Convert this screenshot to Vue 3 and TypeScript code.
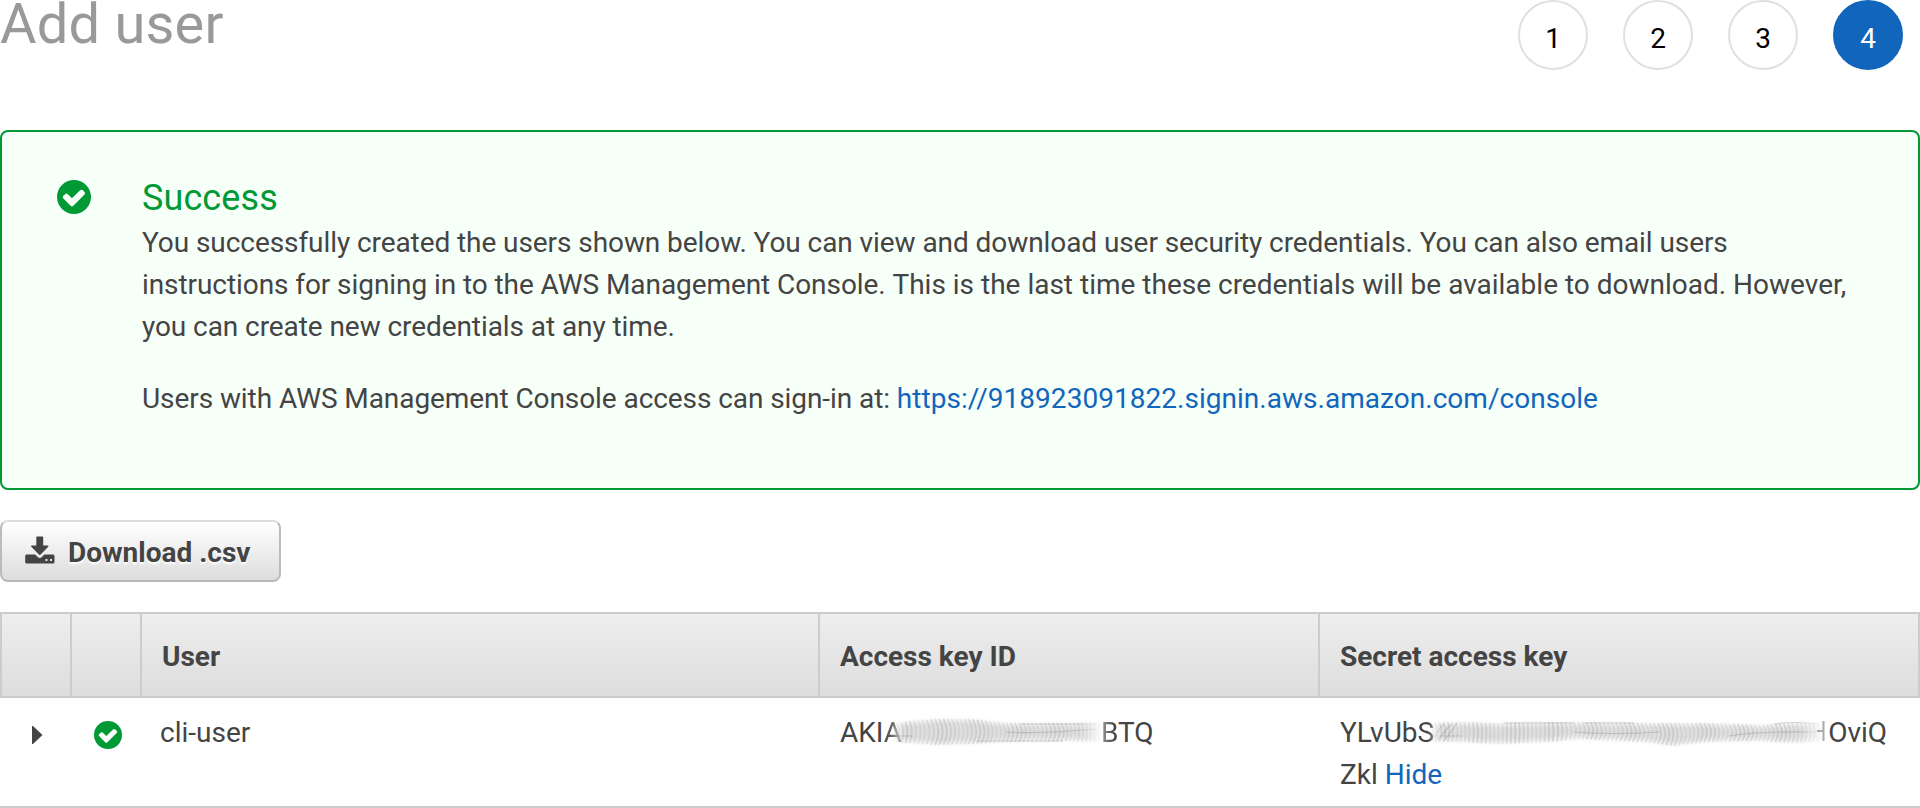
<script setup lang="ts">
interface EdgePoint {
  x: number
  top: number
  bottom: number
  bend: number
}

interface Smear {
  id: string
  width: number
  fill: string
  ridges: { d: string; opacity: number }[]
  streaks: string[]
}

const steps = [1, 2, 3, 4]
const currentStep = 4

const checkPath =
  'M50 0A50 50 0 1 1 50 100A50 50 0 1 1 50 0ZM18 54L40 76Q44 80 48 76L81 43Q85 39 81 35L76 30Q72 27 68 30L44 54L32 42Q28 38 24 42L18 47Q15 50 18 54Z'

function sample(points: EdgePoint[], x: number): EdgePoint {
  const i = Math.max(1, points.findIndex((p) => p.x >= x))
  const a = points[i - 1]
  const b = points[i]
  const t = (x - a.x) / (b.x - a.x)
  const mix = (m: number, n: number) => m + (n - m) * t
  return { x, top: mix(a.top, b.top), bottom: mix(a.bottom, b.bottom), bend: mix(a.bend, b.bend) }
}

function buildSmear(id: string, points: EdgePoint[], streaks: string[]): Smear {
  const first = points[0].x
  const last = points[points.length - 1].x
  const upper = points.map((p) => `${p.x} ${p.top + 2}`)
  const lower = points.map((p) => `${p.x} ${p.bottom - 2}`).reverse()
  const ridges: Smear['ridges'] = []
  for (let x = first + 2, n = 0; x < last; x += 4.2, n++) {
    const p = sample(points, x)
    const middle = (p.top + p.bottom) / 2
    ridges.push({
      d: `M${x} ${p.top}Q${x + p.bend} ${middle} ${x} ${p.bottom}`,
      opacity: 0.3 + 0.1 * Math.sin(n * 0.7),
    })
  }
  return { id, width: last, fill: `M${[...upper, ...lower].join('L')}Z`, ridges, streaks }
}

const keySmear = buildSmear(
  'key',
  [
    { x: 0, top: 19, bottom: 37, bend: 3 },
    { x: 20, top: 16, bottom: 38, bend: 4 },
    { x: 45, top: 14, bottom: 40, bend: 7 },
    { x: 80, top: 14, bottom: 39, bend: 7 },
    { x: 115, top: 18, bottom: 37, bend: 6 },
    { x: 170, top: 18, bottom: 36, bend: 6 },
    { x: 213, top: 17, bottom: 37, bend: -2 },
  ],
  ['M4 31H22', 'M86 36H172', 'M115 27Q150 29 205 24', 'M130 19H205'],
)

const secretSmear = buildSmear(
  'secret',
  [
    { x: 0, top: 18, bottom: 37, bend: 5 },
    { x: 30, top: 17, bottom: 37, bend: 2 },
    { x: 70, top: 18, bottom: 39, bend: 1 },
    { x: 120, top: 17, bottom: 37, bend: 1 },
    { x: 150, top: 17, bottom: 34, bend: 5 },
    { x: 215, top: 18, bottom: 37, bend: 7 },
    { x: 245, top: 18, bottom: 41, bend: 6 },
    { x: 275, top: 18, bottom: 37, bend: 6 },
    { x: 330, top: 20, bottom: 36, bend: 6 },
    { x: 365, top: 18, bottom: 38, bend: 4 },
    { x: 396, top: 17, bottom: 36, bend: 3 },
  ],
  ['M0 31H33', 'M3 35L14 19', 'M9 35L22 19', 'M16 35L28 18', 'M75 18H145', 'M145 27Q185 30 230 27', 'M155 18H205', 'M345 19Q365 16 388 19', 'M300 31Q330 26 388 27'],
)
</script>

<template>
  <main class="page">
    <header class="top">
      <h1 class="title">Add user</h1>
      <ol class="steps">
        <li v-for="step in steps" :key="step" class="step" :class="{ current: step === currentStep }">{{ step }}</li>
      </ol>
    </header>

    <section class="alert">
      <svg class="alert-icon" viewBox="0 0 100 100"><path :d="checkPath" fill="#093" fill-rule="evenodd" /></svg>
      <div class="alert-body">
        <h2>Success</h2>
        <p class="tight">
          You successfully created the users shown below. You can view and download user security credentials. You can
          also email users instructions for signing in to the AWS Management Console.
          <span class="normal"
            >This is the last time these credentials will be available to download. However,</span
          >
          you can create new credentials at any time.
        </p>
        <p class="tight">
          Users with AWS Management Console access can sign-in at:
          <a class="link url">https://918923091822.signin.aws.amazon.com/console</a>
        </p>
      </div>
    </section>

    <button class="download" type="button">
      <svg class="download-icon" viewBox="0 0 30 28">
        <path
          fill="#444"
          fill-rule="evenodd"
          d="M12 .5H17.500Q18.200 .5 18.200 1.200V9.500H22.500Q24.300 9.500 23.200 10.800L15.700 18.600Q14.800 19.500 13.900 18.600L6.300 10.800Q5.200 9.500 7 9.500H11.300V1.200Q11.300 .5 12 .5ZM1.500 18.500H10.200L12.700 21Q14.800 23 16.900 21L19.300 18.500H28Q29.500 18.500 29.500 20V26Q29.500 27.500 28 27.500H1.500Q.2 27.500 .2 26V20Q.2 18.500 1.500 18.500ZM20.500 23V25H22.500V23ZM25 23V25H27V23Z"
        />
      </svg>
      <span class="download-label">Download .csv</span>
    </button>

    <table class="users">
      <colgroup>
        <col class="col-icon" />
        <col class="col-icon" />
        <col class="col-user" />
        <col class="col-key" />
        <col />
      </colgroup>
      <thead>
        <tr>
          <th></th>
          <th></th>
          <th>User</th>
          <th>Access key ID</th>
          <th>Secret access key</th>
        </tr>
      </thead>
      <tbody>
        <tr>
          <td class="icon-cell">
            <svg class="arrow" viewBox="0 0 11 18"><path d="M0 0H1L10.500 9L1 18H0Z" fill="#444" /></svg>
          </td>
          <td class="icon-cell">
            <svg class="row-check" viewBox="0 0 100 100"><path :d="checkPath" fill="#093" fill-rule="evenodd" /></svg>
          </td>
          <td class="user-cell">cli-user</td>
          <td>
            AKI<span class="fade-right">A</span><span class="smear key-gap">
              <svg class="smear-art" :width="keySmear.width" height="50">
                <path :d="keySmear.fill" class="smear-fill" />
                <path v-for="(r, i) in keySmear.ridges" :key="i" :d="r.d" :opacity="r.opacity" class="ridge" />
                <path v-for="s in keySmear.streaks" :key="s" :d="s" class="streak" />
              </svg> </span
            ><span class="fade-left">B</span>TQ
          </td>
          <td>
            YLvUb<span class="fade-end">S</span><span class="smear secret-gap">
              <svg class="smear-art" :width="secretSmear.width" height="50">
                <path :d="secretSmear.fill" class="smear-fill" />
                <path v-for="(r, i) in secretSmear.ridges" :key="i" :d="r.d" :opacity="r.opacity" class="ridge" />
                <path v-for="s in secretSmear.streaks" :key="s" :d="s" class="streak" />
              </svg>
              <svg class="stem" viewBox="0 0 8 20"><path d="M0 10H6M6.500 0V20" stroke="#aaa" stroke-width="2" /></svg> </span
            >OviQ<br />Zkl <a class="link">Hide</a>
          </td>
        </tr>
      </tbody>
    </table>
  </main>
</template>

<style>
body {
  margin: 0;
  background: #fff;
}
</style>

<style scoped>
.page {
  width: 1920px;
  font: 28px/42px Roboto, sans-serif;
  color: #444;
}

.top {
  display: flex;
  justify-content: space-between;
  height: 130px;
  padding-right: 17px;
}

.title {
  margin: 0;
  font-size: 56px;
  font-weight: 400;
  line-height: 48px;
  letter-spacing: 0.2px;
  color: #999;
}

.steps {
  display: flex;
  gap: 35px;
  margin: 0;
  padding: 0;
  list-style: none;
}

.step {
  box-sizing: border-box;
  width: 70px;
  height: 70px;
  border: 2px solid #e0e0e0;
  border-radius: 50%;
  line-height: 73px;
  text-align: center;
  color: #000;
}

.step.current {
  border-color: #1166bb;
  background: #1166bb;
  color: #fff;
}

.alert {
  display: flex;
  box-sizing: border-box;
  height: 360px;
  padding: 45px 60px 0 55px;
  border: 2px solid #093;
  border-radius: 8px;
  background: #f7fff9;
}

.alert-icon {
  flex: none;
  width: 34px;
  height: 34px;
  margin-top: 3px;
}

.alert-body {
  margin-left: 51px;
}

.alert h2 {
  margin: 0 0 3px;
  font-size: 36px;
  font-weight: 400;
  line-height: 42px;
  letter-spacing: 0.1px;
  color: #093;
}

.alert p {
  margin: 0 0 30px;
}

.tight {
  letter-spacing: -0.075px;
}

.normal {
  letter-spacing: 0;
}

.link {
  color: #1166bb;
}

.url {
  letter-spacing: 0.03px;
}

.download {
  display: flex;
  align-items: center;
  box-sizing: border-box;
  width: 281px;
  height: 62px;
  margin: 30px 0;
  padding: 0 0 0 23px;
  border: 2px solid;
  border-color: #ddd #bbb #b7b7b7;
  border-radius: 8px;
  background: linear-gradient(#fff, #ddd);
  font: bold 28px/42px Roboto, sans-serif;
  color: #444;
  text-shadow: 0 2px 2px #fff;
}

.download-icon {
  width: 30px;
  height: 28px;
  margin: 0 13px 3px 0;
}

.download-label {
  padding-top: 3px;
}

.users {
  width: 1920px;
  table-layout: fixed;
  border-collapse: separate;
  border-spacing: 0;
}

.col-icon {
  width: 70px;
}

.col-user {
  width: 678px;
}

.col-key {
  width: 500px;
}

.users th {
  box-sizing: border-box;
  height: 86px;
  padding: 3px 20px 0;
  border: solid #ccc;
  border-width: 2px 0 2px 2px;
  background: linear-gradient(#eee, #ddd);
  text-align: left;
  white-space: nowrap;
}

.users th:last-child {
  border-right-width: 2px;
}

.users td {
  box-sizing: border-box;
  height: 110px;
  padding: 14px 10px 10px 22px;
  border-bottom: 2px solid #ccc;
  vertical-align: top;
  white-space: nowrap;
}

.users .user-cell {
  padding-left: 20px;
}

.users .icon-cell {
  padding: 23px 0 0;
  line-height: 0;
}

.arrow {
  width: 11px;
  height: 18px;
  margin: 5px 0 0 32px;
}

.row-check {
  width: 28px;
  height: 28px;
  margin-left: 24px;
}

.fade-right {
  color: transparent;
  background: linear-gradient(90deg, #555 30%, #999);
  background-clip: text;
}

.fade-left {
  color: transparent;
  background: linear-gradient(90deg, #999, #444 80%);
  background-clip: text;
}

.fade-end {
  color: transparent;
  background: linear-gradient(90deg, #444 60%, #777);
  background-clip: text;
}

.smear {
  display: inline-block;
  position: relative;
  height: 1px;
  line-height: 0;
  vertical-align: baseline;
}

.key-gap {
  width: 199px;
}

.secret-gap {
  width: 394px;
}

.smear-art {
  position: absolute;
  left: -11px;
  top: -36px;
  overflow: visible;
  mask-image: linear-gradient(90deg, transparent, #000 14px, #000 calc(100% - 25px), transparent);
}

.secret-gap .smear-art {
  left: -5px;
}

.smear-fill {
  fill: #dedede;
  filter: blur(2.5px);
}

.ridge {
  fill: none;
  stroke: #aaa;
  stroke-width: 1.8;
  filter: blur(0.5px);
}

.streak {
  fill: none;
  stroke: #888;
  stroke-width: 1.2;
  opacity: 0.35;
  filter: blur(0.6px);
}

.stem {
  position: absolute;
  right: 3px;
  top: -20px;
  width: 8px;
  height: 20px;
}
</style>
